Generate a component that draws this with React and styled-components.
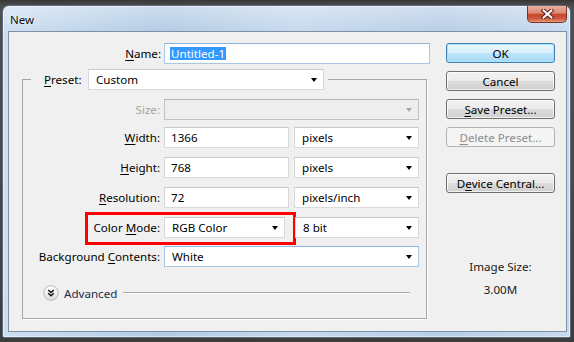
import React from 'react'
import styled, { createGlobalStyle } from 'styled-components'

const Global = createGlobalStyle`
  html, body { margin: 0; padding: 0; background: #474747; }
  body {
    font-family: "Noto Sans", "Liberation Sans", sans-serif;
    font-size: 11.6px;
    color: #000;
  }
  #root { width: 574px; height: 342px; overflow: hidden; }
`

/* desktop + aero window frame */
const Desktop = styled.div`
  width: 574px;
  height: 342px;
  box-sizing: border-box;
  padding: 5px 3px 0 2px;
  background: linear-gradient(#363636, #4f4f4f 6px, #474747 60%, #3d3d3d);
`

const Window = styled.div`
  width: 569px;
  height: 333px;
  box-sizing: border-box;
  border: 1px solid #5d6b7c;
  border-radius: 7px 7px 2px 2px;
  padding: 0 3px 5px 5px;
  background:
    linear-gradient(rgba(255,255,255,.35), rgba(255,255,255,0) 26px),
    linear-gradient(90deg, #cddff1, #b3cbe4 28%, #c6d9ed 52%, #b8cee6 78%, #c7daee);
  box-shadow: inset 0 0 0 1px rgba(255,255,255,.45);
  display: flex;
  flex-direction: column;
`

const TitleBar = styled.div`
  height: 25px;
  display: flex;
  justify-content: space-between;
  align-items: flex-start;
`

const Title = styled.div`
  padding: 6px 0 0 2px;
  font-size: 11.5px;
  line-height: 16px;
  color: #111;
  text-shadow: 0 0 6px rgba(255,255,255,.9);
`

const CloseButton = styled.div`
  width: 40px;
  height: 17px;
  box-sizing: border-box;
  border: 1px solid #7a3325;
  border-top: none;
  border-radius: 0 0 5px 5px;
  background: linear-gradient(#eab0a0, #dc8670 45%, #c6482d 52%, #cf5a3e 80%, #e69a80);
  display: flex;
  align-items: center;
  justify-content: center;
`

/* client area */
const Client = styled.div`
  flex: 1;
  box-sizing: border-box;
  border: 1px solid #7f90a5;
  background: #f0f0f0;
  display: flex;
`

const Form = styled.div`
  width: 421px;
  padding-top: 11px;
`

const Row = styled.div`
  display: flex;
  align-items: center;
  height: 21px;
  margin-top: ${p => p.$mt || 0}px;
`

const Label = styled.label`
  width: ${p => p.$w}px;
  flex: none;
  text-align: ${p => p.$align || 'right'};
  white-space: nowrap;
  color: ${p => (p.$disabled ? '#a3a3a3' : '#000')};
  u { text-decoration-thickness: 1px; text-underline-offset: 2px; }
`

const Field = styled.div`
  box-sizing: border-box;
  width: ${p => p.$w}px;
  height: 21px;
  margin-left: ${p => p.$ml ?? 4}px;
  flex: none;
  display: flex;
  align-items: center;
  padding: 0 ${p => (p.$select ? 6 : 5)}px 0 ${p => (p.$select ? 7 : 6)}px;
  background: ${p => (p.$disabled ? '#eeeeee' : '#fff')};
  border: 1px solid ${p => (p.$focus ? '#a9c8e8' : p.$disabled ? '#c2c2c2' : '#d9d9d9')};
  border-top-color: ${p => (p.$focus ? '#8fb5de' : p.$disabled ? '#b5b5b5' : '#c9c9c9')};
  white-space: nowrap;
  ${p => p.$select && `
    &::after {
      content: '';
      margin-left: auto;
      border-left: 3.5px solid transparent;
      border-right: 3.5px solid transparent;
      border-top: 4px solid ${p.$disabled ? '#a8a8a8' : '#000'};
    }
  `}
`

const Selected = styled.span`
  background: #3399ff;
  color: #fff;
  line-height: 13px;
  padding: 0 1px;
  margin-left: -1px;
`

const Group = styled.fieldset`
  width: 405px;
  box-sizing: border-box;
  margin: 5px 0 0 13px;
  padding: 0 0 16px 0;
  min-inline-size: 0;
  border: 1px solid #a6a6a6;
  box-shadow: 1px 1px 0 #fff;
`

const Legend = styled.legend`
  margin-left: 8px;
  padding: 0 4px 0 13px;
  display: flex;
  align-items: center;
  height: 21px;
`

const Marked = styled.div`
  display: flex;
  align-items: center;
  margin: -2px 0 -4px 65px;
  padding: 2px 8px 4px 0;
  outline: 3px solid #ff0000;
`

const Expander = styled.div`
  display: flex;
  align-items: center;
  height: 18px;
  margin: 17px 16px 0 20px;
  color: #1b2b48;
`

const ExpanderText = styled.span`
  margin-left: 5px;
`

const Rule = styled.div`
  flex: 1;
  margin-left: 6px;
  height: 0;
  border-top: 1px solid #a3a3a3;
  border-bottom: 1px solid #fff;
`

/* right side column */
const Side = styled.div`
  width: 109px;
  margin-left: 16px;
  padding-top: 11px;
  display: flex;
  flex-direction: column;
  align-items: stretch;
`

const Button = styled.div`
  height: 20px;
  box-sizing: border-box;
  margin-top: ${p => p.$mt || 0}px;
  border: 1px solid ${p => (p.$default ? '#3c7fb1' : p.$disabled ? '#b0b4b7' : '#707070')};
  border-radius: 3px;
  display: flex;
  align-items: center;
  justify-content: center;
  color: ${p => (p.$disabled ? '#8c8c8c' : '#000')};
  background: ${p =>
    p.$default
      ? 'linear-gradient(#eaf6fd, #d9f0fc 50%, #bee6fd 50%, #a7d9f5)'
      : p.$disabled
      ? '#f4f4f4'
      : 'linear-gradient(#f2f2f2, #ebebeb 50%, #dddddd 50%, #cfcfcf)'};
  box-shadow: inset 0 0 0 1px ${p => (p.$default ? '#a8e4fb' : p.$disabled ? 'transparent' : 'rgba(255,255,255,.7)')};
  u { text-decoration-thickness: 1px; text-underline-offset: 2px; }
`

const Info = styled.div`
  margin-top: ${p => p.$mt}px;
  text-align: center;
  line-height: 16px;
  color: #1a1a1a;
`

const CloseX = () => (
  <svg width="13" height="10" viewBox="0 0 13 10">
    <path d="M2.5 1.5 L10.5 8.5 M10.5 1.5 L2.5 8.5" stroke="#5a2118" strokeWidth="4" strokeLinecap="square" />
    <path d="M2.5 1.5 L10.5 8.5 M10.5 1.5 L2.5 8.5" stroke="#fff" strokeWidth="2" strokeLinecap="square" />
  </svg>
)

const ExpandIcon = () => (
  <svg width="16" height="16" viewBox="0 0 16 16">
    <defs>
      <linearGradient id="exg" x1="0" y1="0" x2="0" y2="1">
        <stop offset="0" stopColor="#ffffff" />
        <stop offset="1" stopColor="#dcdcdc" />
      </linearGradient>
    </defs>
    <circle cx="8" cy="8" r="7.3" fill="url(#exg)" stroke="#b9b9b9" strokeWidth="1" />
    <path d="M5.2 5 L8 7.5 L10.8 5 M5.2 8.3 L8 10.8 L10.8 8.3" stroke="#111" strokeWidth="1.4" fill="none" />
  </svg>
)

export default function App() {
  return (
    <Desktop>
      <Global />
      <Window>
        <TitleBar>
          <Title>New</Title>
          <CloseButton><CloseX /></CloseButton>
        </TitleBar>
        <Client>
          <Form>
            <Row>
              <Label $w={152}><u>N</u>ame:</Label>
              <Field $w={266} $ml={3} $focus><Selected>Untitled-1</Selected></Field>
            </Row>

            <Group>
              <Legend>
                <Label $w={44} $align="left"><u>P</u>reset:</Label>
                <Field $w={236} $ml={0} $select>Custom</Field>
              </Legend>

              <Row $mt={9}>
                <Label $w={137} $disabled>Size:</Label>
                <Field $w={255} $select $disabled />
              </Row>
              <Row $mt={7}>
                <Label $w={137}><u>W</u>idth:</Label>
                <Field $w={125}>1366</Field>
                <Field $w={125} $ml={5} $select>pixels</Field>
              </Row>
              <Row $mt={9}>
                <Label $w={137}><u>H</u>eight:</Label>
                <Field $w={125}>768</Field>
                <Field $w={125} $ml={5} $select>pixels</Field>
              </Row>
              <Row $mt={9}>
                <Label $w={137}><u>R</u>esolution:</Label>
                <Field $w={125}>72</Field>
                <Field $w={125} $ml={5} $select>pixels/inch</Field>
              </Row>
              <Row $mt={9}>
                <Marked>
                  <Label $w={72}>Color <u>M</u>ode:</Label>
                  <Field $w={121} $select>RGB Color</Field>
                </Marked>
                <Field $w={124} $ml={2} $select>8 bit</Field>
              </Row>
              <Row $mt={8}>
                <Label $w={137}>Background <u>C</u>ontents:</Label>
                <Field $w={255} $select $focus>White</Field>
              </Row>

              <Expander>
                <ExpandIcon />
                <ExpanderText>Advanced</ExpanderText>
                <Rule />
              </Expander>
            </Group>
          </Form>

          <Side>
            <Button $default>OK</Button>
            <Button $mt={8}>Cancel</Button>
            <Button $mt={8}><u>S</u>ave Preset...</Button>
            <Button $mt={8} $disabled><u>D</u>elete Preset...</Button>
            <Button $mt={26}>D<u>e</u>vice Central...</Button>
            <Info $mt={66}>Image Size:</Info>
            <Info $mt={7}>3.00M</Info>
          </Side>
        </Client>
      </Window>
    </Desktop>
  )
}
